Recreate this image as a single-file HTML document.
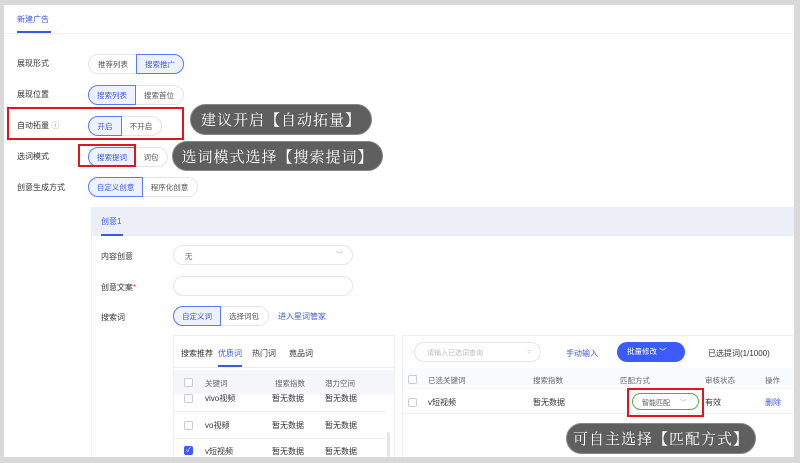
<!DOCTYPE html>
<html><head><meta charset="utf-8"><style>
*{box-sizing:border-box;margin:0;padding:0}
body{width:800px;height:463px;background:#d9d9d9;position:relative;overflow:hidden;font-family:"Liberation Sans","Noto Sans CJK SC",sans-serif;font-size:8px;color:#333}
.a{position:absolute;white-space:nowrap}
.main{position:absolute;left:4px;top:5px;width:790px;height:452px;background:#fff}
.seg{position:absolute;display:flex;height:20px;border:1px solid #e3e5ea;border-radius:10px;background:#fff}
.seg span{display:flex;align-items:center;justify-content:center;font-size:7.5px;color:#555}
.seg span.on{border:1px solid #5b7cfa;background:#eef2ff;color:#3b5bdb;border-radius:10px 0 0 10px;margin:-1px}
.seg span.on.r{border-radius:0 10px 10px 0}
.red{position:absolute;border:2.5px solid #e3141c}
.pill{position:absolute;background:#5f5f5f;border:1px solid #888;border-radius:16px;color:#fff;font-family:"Noto Serif CJK SC",serif;font-size:15px;letter-spacing:1px;display:flex;align-items:center;justify-content:center;white-space:nowrap;overflow:hidden}
.lbl{position:absolute;font-size:8px;color:#333}
.cb{position:absolute;width:9px;height:9px;border:1px solid #ccc;border-radius:2px;background:#fff}
.g{color:#666;font-size:7.5px}
</style></head><body>
<div class="main"></div>
<div class="a" style="left:17px;top:14px;color:#3b5bdb;font-size:8px">新建广告</div>
<div class="a" style="left:17px;top:31px;width:34px;height:2px;background:#3b5bdb"></div>
<div class="a" style="left:4px;top:33px;width:790px;height:1px;background:#f0f1f4"></div>
<div class="a" style="left:91px;top:207px;width:1px;height:250px;background:#f0f1f4"></div>

<div class="lbl" style="left:17px;top:58px">展现形式</div>
<div class="seg" style="left:88px;top:54px;width:96px"><span style="width:48px">推荐列表</span><span class="on r" style="width:48px">搜索推广</span></div>
<div class="lbl" style="left:17px;top:89px">展现位置</div>
<div class="seg" style="left:88px;top:85px;width:96px"><span class="on" style="width:48px">搜索列表</span><span style="width:48px">搜索首位</span></div>
<div class="lbl" style="left:17px;top:120px">自动拓量 <span style="color:#999">ⓘ</span></div>
<div class="seg" style="left:88px;top:116px;width:74px"><span class="on" style="width:34px">开启</span><span style="width:40px">不开启</span></div>
<div class="lbl" style="left:17px;top:151px">选词模式</div>
<div class="seg" style="left:88px;top:147px;width:80px"><span class="on" style="width:48px">搜索提词</span><span style="width:32px">词包</span></div>
<div class="lbl" style="left:17px;top:182px">创意生成方式</div>
<div class="seg" style="left:88px;top:177px;width:110px"><span class="on" style="width:55px">自定义创意</span><span style="width:55px">程序化创意</span></div>

<div class="red" style="left:7px;top:107px;width:177px;height:33px"></div>
<div class="red" style="left:78px;top:144px;width:58px;height:23px"></div>
<div class="pill" style="left:190px;top:104px;width:182px;height:31px">建议开启【自动拓量】</div>
<div class="pill" style="left:172px;top:141px;width:211px;height:30px">选词模式选择【搜索提词】</div>

<div class="a" style="left:91px;top:207px;width:703px;height:29px;background:#eceff7"></div>
<div class="a" style="left:101px;top:216px;color:#3b5bdb">创意1</div>
<div class="a" style="left:101px;top:234px;width:22px;height:2px;background:#3b5bdb"></div>
<div class="lbl" style="left:101px;top:251px">内容创意</div>
<div class="a" style="left:173px;top:245px;width:180px;height:20px;border:1px solid #e3e5ea;border-radius:10px"><span class="a g" style="left:11px;top:5px">无</span><span class="a" style="right:9px;top:4px;color:#aaa;font-size:7px">﹀</span></div>
<div class="lbl" style="left:101px;top:282px">创意文案<span style="color:#e33">*</span></div>
<div class="a" style="left:173px;top:276px;width:180px;height:20px;border:1px solid #e3e5ea;border-radius:10px"></div>
<div class="lbl" style="left:101px;top:312px">搜索词</div>
<div class="seg" style="left:173px;top:306px;width:96px"><span class="on" style="width:48px">自定义词</span><span style="width:48px">选择词包</span></div>
<div class="a" style="left:278px;top:311px;color:#3b5bdb">进入星词管家</div>

<div class="a" style="left:173px;top:335px;width:222px;height:122px;border:1px solid #eceef2;border-bottom:none"></div>
<div class="a" style="left:181px;top:348px">搜索推荐</div>
<div class="a" style="left:218px;top:348px;color:#3b5bdb">优质词</div>
<div class="a" style="left:252px;top:348px">热门词</div>
<div class="a" style="left:289px;top:348px">竟品词</div>
<div class="a" style="left:218px;top:365px;width:24px;height:2px;background:#3b5bdb"></div>
<div class="a" style="left:174px;top:367px;width:220px;height:1px;background:#eceef2"></div>
<div class="a" style="left:174px;top:370px;width:220px;height:24px;background:#f5f6fa"></div>
<div class="cb" style="left:184px;top:378px"></div>
<div class="a g" style="left:205px;top:378px">关键词</div><div class="a g" style="left:275px;top:378px">搜索指数</div><div class="a g" style="left:325px;top:378px">潜力空间</div>
<div class="cb" style="left:184px;top:394px"></div>
<div class="a" style="left:205px;top:393px">vivo视频</div><div class="a" style="left:272px;top:393px">暂无数据</div><div class="a" style="left:325px;top:393px">暂无数据</div>
<div class="a" style="left:174px;top:411px;width:212px;height:1px;background:#eceef2"></div>
<div class="cb" style="left:184px;top:421px"></div>
<div class="a" style="left:205px;top:420px">vo视频</div><div class="a" style="left:272px;top:420px">暂无数据</div><div class="a" style="left:325px;top:420px">暂无数据</div>
<div class="a" style="left:174px;top:438px;width:212px;height:1px;background:#eceef2"></div>
<div class="cb" style="left:184px;top:446px;background:#3b5bfd;border-color:#3b5bfd;color:#fff;font-size:7px;line-height:7px;text-align:center">✓</div>
<div class="a" style="left:205px;top:446px">v短视频</div><div class="a" style="left:272px;top:446px">暂无数据</div><div class="a" style="left:325px;top:446px">暂无数据</div>
<div class="a" style="left:387px;top:432px;width:3px;height:25px;background:#e5e5e5;border-radius:2px"></div>

<div class="a" style="left:402px;top:335px;width:392px;height:122px;border:1px solid #eceef2;border-bottom:none;border-right:none"></div>
<div class="a" style="left:414px;top:342px;width:127px;height:20px;border:1px solid #e3e5ea;border-radius:10px"><span class="a" style="left:12px;top:5px;color:#bbb;font-size:7px">请输入已选词查询</span><span class="a" style="right:8px;top:4px;color:#bbb;font-size:8px">○</span></div>
<div class="a" style="left:566px;top:348px;color:#3b5bdb">手动输入</div>
<div class="a" style="left:617px;top:342px;width:68px;height:20px;background:#3b5bfd;border-radius:10px;color:#fff;font-size:7.5px;line-height:20px;padding-left:10px">批量修改 ﹀</div>
<div class="a" style="left:708px;top:348px">已选提词(1/1000)</div>
<div class="a" style="left:403px;top:368px;width:391px;height:22px;background:#fafbfc"></div>
<div class="cb" style="left:408px;top:375px"></div>
<div class="a g" style="left:428px;top:375px">已选关键词</div><div class="a g" style="left:533px;top:375px">搜索指数</div><div class="a g" style="left:620px;top:375px">匹配方式</div><div class="a g" style="left:705px;top:375px">审核状态</div><div class="a g" style="left:765px;top:375px">操作</div>
<div class="cb" style="left:408px;top:398px"></div>
<div class="a" style="left:428px;top:397px">v短视频</div><div class="a" style="left:533px;top:397px">暂无数据</div>
<div class="a" style="left:632px;top:393px;width:67px;height:17px;border:1px solid #4caf50;border-radius:9px;font-size:7px;color:#555;padding:4px 0 0 9px">智能匹配 <span style="color:#aaa;margin-left:8px">﹀</span></div>
<div class="a" style="left:705px;top:397px">有效</div><div class="a" style="left:765px;top:397px;color:#3b5bdb">删除</div>
<div class="a" style="left:403px;top:413px;width:391px;height:1px;background:#eceef2"></div>
<div class="red" style="left:627px;top:388px;width:77px;height:29px"></div>
<div class="pill" style="left:566px;top:423px;width:190px;height:31px">可自主选择【匹配方式】</div>
</body></html>
